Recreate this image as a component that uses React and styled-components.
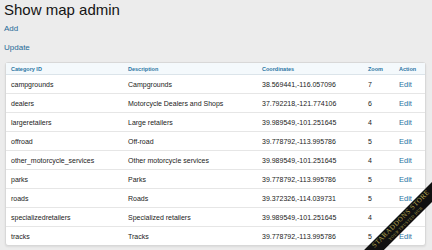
import React from 'react'
import styled, { createGlobalStyle } from 'styled-components'

const GlobalStyle = createGlobalStyle`
    html, body {
        margin: 0;
        padding: 0;
        background: #ececec;
        font-family: "Liberation Sans", Arial, sans-serif;
    }
`;

const Page = styled.div`
    position: relative;
    width: 432px;
    height: 250px;
    overflow: hidden;
    padding: 1px 8px 0 4px;
    box-sizing: border-box;
`;

const Title = styled.h1`
    margin: 0;
    font-size: 15px;
    font-weight: normal;
    color: #141414;
    line-height: 18px;
`;

const Links = styled.div`
    display: flex;
    flex-direction: column;
    gap: 9px;
    margin-top: 5px;
`;

const Link = styled.a`
    font-size: 8px;
    line-height: 10px;
    color: #1f6a98;
    text-decoration: none;
`;

const Table = styled.table`
    margin-top: 9px;
    margin-left: 1px;
    width: 419px;
    border-collapse: separate;
    border-spacing: 0;
    table-layout: fixed;
    background: #fff;
    border: 1px solid #d8d8d8;
    border-radius: 3px;
    box-shadow: 0 1px 2px rgba(0, 0, 0, 0.08);
`;

const Th = styled.th`
    width: ${p => p.$w}px;
    height: 11px;
    padding: 0 0 0 5px;
    text-align: left;
    font-size: 5.5px;
    font-weight: bold;
    color: #2a75a3;
    background: #f4f9fc;
    border-bottom: 1px solid #dbe4ea;
`;

const Td = styled.td`
    height: 18px;
    padding: 0 0 0 5px;
    font-size: 7px;
    color: #222;
    border-bottom: ${p => (p.$last ? 'none' : '1px solid #e6e6e6')};
    white-space: nowrap;
`;

const EditLink = styled.a`
    color: #2a75a3;
    font-size: 7.5px;
    text-decoration: none;
`;

const Ribbon = styled.div`
    position: absolute;
    left: 333px;
    top: 214px;
    width: 140px;
    height: 14px;
    background: #111;
    transform: rotate(-45deg);
    display: flex;
    flex-direction: column;
    align-items: center;
    justify-content: center;
    font-family: "Liberation Serif", serif;
    color: #b5a550;
    line-height: 1;
`;

const RibbonMain = styled.span`
    font-size: 7px;
    letter-spacing: 0.5px;
`;

const RibbonSub = styled.span`
    font-size: 4px;
    letter-spacing: 0.4px;
    margin-top: 0.5px;
`;

const rows = [
    ['campgrounds', 'Campgrounds', '38.569441,-116.057096', 7],
    ['dealers', 'Motorcycle Dealers and Shops', '37.792218,-121.774106', 6],
    ['largeretailers', 'Large retailers', '39.989549,-101.251645', 4],
    ['offroad', 'Off-road', '39.778792,-113.995786', 5],
    ['other_motorcycle_services', 'Other motorcycle services', '39.989549,-101.251645', 4],
    ['parks', 'Parks', '39.778792,-113.995786', 5],
    ['roads', 'Roads', '39.372326,-114.039731', 5],
    ['specializedretailers', 'Specialized retailers', '39.989549,-101.251645', 4],
    ['tracks', 'Tracks', '39.778792,-113.995786', 5],
];

const App = () => {
    return (
        <Page>
            <GlobalStyle />
            <Title>Show map admin</Title>
            <Links>
                <Link href="#">Add</Link>
                <Link href="#">Update</Link>
            </Links>
            <Table>
                <thead>
                    <tr>
                        <Th $w={112}>Category ID</Th>
                        <Th $w={129}>Description</Th>
                        <Th $w={101}>Coordinates</Th>
                        <Th $w={26}>Zoom</Th>
                        <Th $w={26}>Action</Th>
                    </tr>
                </thead>
                <tbody>
                    {rows.map((r, i) => {
                        const last = i === rows.length - 1;
                        return (
                            <tr key={r[0]}>
                                <Td $last={last}>{r[0]}</Td>
                                <Td $last={last}>{r[1]}</Td>
                                <Td $last={last}>{r[2]}</Td>
                                <Td $last={last}>{r[3]}</Td>
                                <Td $last={last}><EditLink href="#">Edit</EditLink></Td>
                            </tr>
                        );
                    })}
                </tbody>
            </Table>
            <Ribbon>
                <RibbonMain>STARADDONS STORE</RibbonMain>
                <RibbonSub>YOUR TRUSTED HUB</RibbonSub>
            </Ribbon>
        </Page>
    )
}

export default App
